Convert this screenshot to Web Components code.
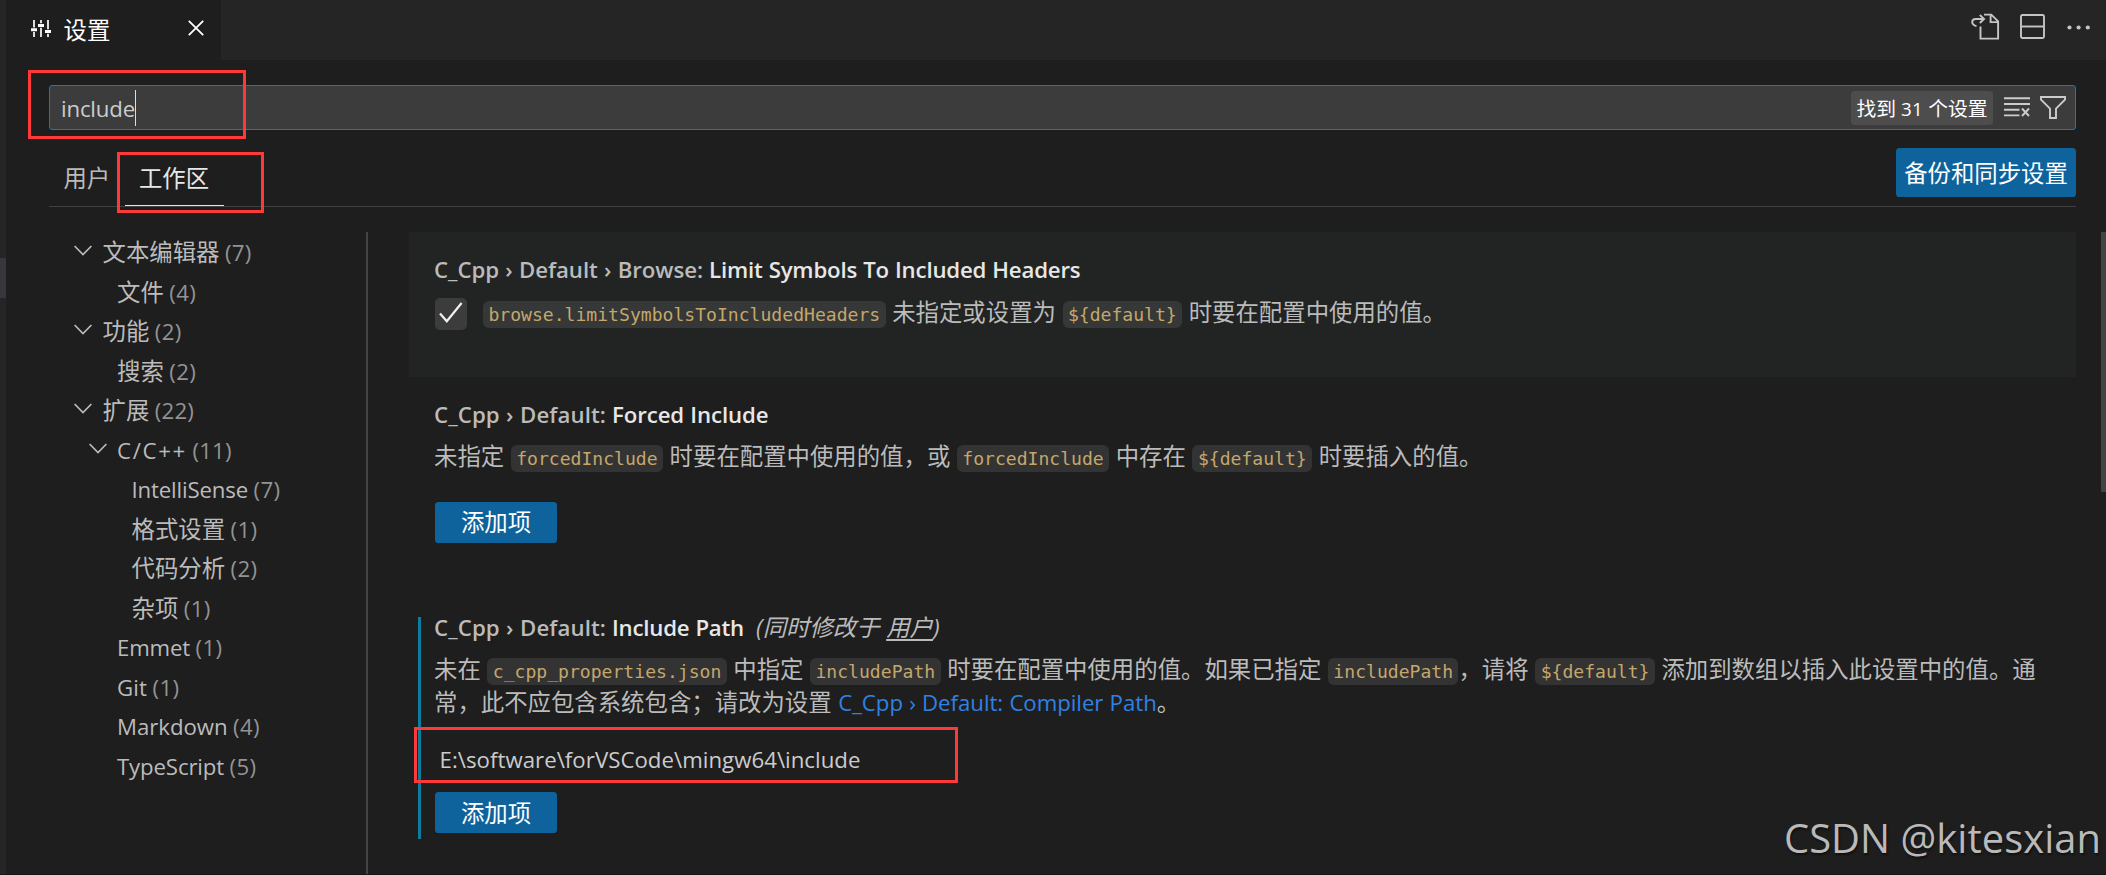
<!DOCTYPE html>
<html lang="zh-CN">
<head>
<meta charset="utf-8">
<title>设置</title>
<style>
  body {
    margin: 0;
    width: 2106px;
    height: 875px;
    overflow: hidden;
    background: #1e1e1e;
    color: #bbbbbb;
    font-family: "Open Sans", "Noto Sans CJK SC", sans-serif;
    font-size: 23.4px;
    line-height: 33px;
  }
</style>
</head>
<body>
<settings-editor></settings-editor>

<script>
// Latin text set to a given advance width
class TextRun extends HTMLElement {
  constructor() {
    super();
    this.attachShadow({mode: 'open'}).innerHTML = `
      <style>
        :host { display: inline-block; white-space: pre; font-size: .95em; }
      </style>
      <span><slot></slot></span>
    `.trim().replace(/\n\s*<span>/, '<span>');
  }

  connectedCallback() {
    const width = Number(this.getAttribute('width'));
    if (!width) return;
    const natural = this.shadowRoot.querySelector('span').getBoundingClientRect().width;
    this.style.letterSpacing = (width - natural) / this.textContent.length + 'px';
    this.style.width = width + 'px';
  }
}

class CodeChip extends HTMLElement {
  constructor() {
    super();
    this.attachShadow({mode: 'open'}).innerHTML = `
      <style>
        :host {
          display: inline;
          padding: 3px 5.4px;
          border-radius: 6px;
          background: rgba(255, 255, 255, .095);
          color: #c5a76b;
          font-family: "DejaVu Sans Mono", monospace;
          font-size: 18.09px;
          word-spacing: 0;
        }
      </style><slot></slot>`;
  }
}

class UiButton extends HTMLElement {
  constructor() {
    super();
    this.attachShadow({mode: 'open'}).innerHTML = `
      <style>
        :host {
          display: flex;
          align-items: center;
          justify-content: center;
          box-sizing: border-box;
          width: 122px;
          height: 41px;
          padding-top: 1px;
          border-radius: 3.6px;
          background: #0e639c;
          color: #fff;
        }
      </style>
      <slot></slot>
    `;
  }
}

const ICONS = {
  sliders: [20, 17, `<path d="M3 0v7.500M3 12v5M10 0v3.300M10 7.800v9.200M17 0v9.300M17 13.700v3.300" stroke-width="1.700"/>
    <path d="M0 9.800h6M7 5.500h6M14 11.500h6" stroke-width="3"/>`],
  close: [16, 16, '<path d="M.8.8l14.4 14.4M15.2.8L.8 15.2" stroke-width="1.8"/>'],
  goto: [30, 28, `<path d="M13 1.600h7.300l6.800 6.800v17.200h-17.600v-12M19.600 1.600v7.500h7.500" stroke-width="1.9"/>
    <path d="M5.500 13.200C-.4 11.500.2 6.200 4.800 6H13M8.800 2l4.300 4-4.300 4" stroke-width="1.900"/>`],
  split: [25, 25, '<rect x="1" y="1" width="23" height="23" rx="1.500" stroke-width="1.900"/><path d="M1 12.500h23" stroke-width="1.900"/>'],
  more: [24, 5, '<g fill="currentColor" stroke="none"><circle cx="2.500" cy="2.500" r="2.100"/><circle cx="11.600" cy="2.500" r="2.100"/><circle cx="20.800" cy="2.500" r="2.100"/></g>'],
  clear: [26, 20, '<path d="M0 1.300h26M0 7h26M0 12.700h15.500M0 18.400h15.500M18 11.500l7 7.500M25 11.500l-7 7.500" stroke-width="1.900"/>'],
  filter: [26, 23, '<path d="M1 1h24v2.600l-9 9V22h-6v-9.400l-9-9z" stroke-width="1.900"/>'],
  chevron: [18, 11, '<path d="M.6 1l8.400 8.600L17.400 1" stroke-width="1.700"/>'],
  check: [24, 21, '<path d="M1 11.500l6.800 7.700L22.600 1" stroke-width="2.200"/>']
};

class UiIcon extends HTMLElement {
  constructor() {
    super();
    this.attachShadow({mode: 'open'});
  }

  connectedCallback() {
    const [w, h, body] = ICONS[this.getAttribute('name')];
    this.shadowRoot.innerHTML = `
      <style>
        :host { display: block; flex: none; width: ${w}px; height: ${h}px; }
        svg { display: block; }
      </style>
      <svg width="${w}" height="${h}" viewBox="0 0 ${w} ${h}" fill="none" stroke="currentColor">${body}</svg>
    `;
  }
}

class EditorTabs extends HTMLElement {
  constructor() {
    super();
    this.attachShadow({mode: 'open'}).innerHTML = `
      <style>
        :host { display: flex; height: 60px; background: #252526; }
        .tab {
          display: flex;
          align-items: flex-start;
          box-sizing: border-box;
          width: 215px;
          padding: 20px 17px 0 25px;
          background: #1e1e1e;
          color: #fff;
        }
        .tab span { margin: -6px auto 0 12.500px; }
        .actions {
          display: flex;
          align-items: center;
          margin-left: auto;
          padding: 0 15px 6px 0;
          color: #c5c5c5;
        }
        ui-icon[name="split"] { margin: 0 22px 1px 19px; }
      </style>
      <div class="tab">
        <ui-icon name="sliders"></ui-icon><span>设置</span><ui-icon name="close"></ui-icon>
      </div>
      <div class="actions">
        <ui-icon name="goto"></ui-icon><ui-icon name="split"></ui-icon><ui-icon name="more"></ui-icon>
      </div>
    `;
  }
}

class SearchBox extends HTMLElement {
  constructor() {
    super();
    this.attachShadow({mode: 'open'}).innerHTML = `
      <style>
        :host {
          display: flex;
          align-items: center;
          box-sizing: border-box;
          height: 45px;
          padding: 0 9px 0 11px;
          border: 1px solid #007fd4;
          border-radius: 3px;
          background: #3c3c3c;
          color: #cccccc;
        }
        .query { padding-top: 2px; }
        .caret { width: 1px; height: 36px; background: #ddd; }
        .count {
          box-sizing: border-box;
          margin-left: auto;
          width: 142px;
          height: 34px;
          line-height: 34px;
          padding-top: 1.500px;
          margin-right: 11px;
          border-radius: 4px;
          background: #4d4d4d;
          color: #fff;
          font-size: 19.8px;
          text-align: center;
        }
        ui-icon { margin-bottom: 1px; }
        ui-icon + ui-icon { margin-left: 10px; }
      </style>
      <text-run class="query" width="74">include</text-run><div class="caret"></div>
      <div class="count">找到 <text-run width="22">31</text-run> 个设置</div>
      <ui-icon name="clear"></ui-icon><ui-icon name="filter"></ui-icon>
    `;
  }
}

class ScopeBar extends HTMLElement {
  constructor() {
    super();
    this.attachShadow({mode: 'open'}).innerHTML = `
      <style>
        :host {
          display: flex;
          align-items: flex-start;
          box-sizing: border-box;
          height: 59px;
          border-bottom: 1px solid #404040;
        }
        .scope {
          box-sizing: border-box;
          height: 58px;
          padding: 14px 14.400px 0;
        }
        .active { color: #e7e7e7; border-bottom: 1px solid #e7e7e7; }
        ui-button { width: 180px; height: 49px; margin-left: auto; }
      </style>
      <div class="scope">用户</div>
      <div class="scope active">工作区</div>
      <ui-button>备份和同步设置</ui-button>
    `;
  }
}

class TocItem extends HTMLElement {
  constructor() {
    super();
    this.attachShadow({mode: 'open'});
  }

  connectedCallback() {
    const level = Number(this.getAttribute('level'));
    const open = this.hasAttribute('open');
    const count = this.getAttribute('count');
    const width = count.length > 1 ? 39.2 : 26.8;
    this.shadowRoot.innerHTML = `
      <style>
        :host {
          display: flex;
          align-items: center;
          box-sizing: border-box;
          height: 39.500px;
          line-height: 37.500px;
          padding: 2px 0 0 ${25 + level * 14.5}px;
        }
        .twistie { width: 28.500px; }
        ui-icon { margin-bottom: 4px; }
        .count { margin-left: 5.500px; color: #939393; }
      </style>
      <div class="twistie">${open ? '<ui-icon name="chevron"></ui-icon>' : ''}</div>
      <slot></slot>
      <div class="count"><text-run width="${width}">(${count})</text-run></div>
    `;
  }
}

class SettingRow extends HTMLElement {
  constructor() {
    super();
    this.attachShadow({mode: 'open'}).innerHTML = `
      <style>
        :host {
          display: flex;
          box-sizing: border-box;
          padding: 20.600px 0 0 9px;
        }
        :host([focused]) { padding-top: 21.400px; background: #212423; }
        .indicator { width: 3px; height: 222px; margin: 6px 13px 0 0; }
        :host([modified]) .indicator { background: #0c7d9d; }
        .body { min-width: 0; word-spacing: .5px; white-space: nowrap; }
        .title { display: flex; height: 33px; margin-bottom: 9.200px; font-weight: 600; }
        .name { color: #e7e7e7; margin-left: 6px; }
        .note { margin-left: 12px; font-weight: 400; font-style: italic; }
      </style>
      <div class="indicator"></div>
      <div class="body">
        <div class="title">
          <slot name="category"></slot>
          <div class="name"><slot name="name"></slot></div>
          <div class="note"><slot name="note"></slot></div>
        </div>
        <slot></slot>
      </div>
    `;
  }
}

class CheckBox extends HTMLElement {
  constructor() {
    super();
    this.attachShadow({mode: 'open'}).innerHTML = `
      <style>
        :host {
          display: flex;
          align-items: center;
          justify-content: center;
          width: 32px;
          height: 32px;
          border-radius: 5px;
          background: #3c3c3c;
          color: #f0f0f0;
        }
        ui-icon { margin-bottom: 3px; }
      </style>
      <ui-icon name="check"></ui-icon>
    `;
  }
}

// red frame drawn over the editor
class MarkFrame extends HTMLElement {
  connectedCallback() {
    const [x, y, w, h] = this.getAttribute('box').split(' ');
    this.attachShadow({mode: 'open'}).innerHTML = `
      <style>
        :host {
          position: absolute;
          left: ${x}px;
          top: ${y}px;
          width: ${w}px;
          height: ${h}px;
          box-sizing: border-box;
          border: 3px solid #ff3838;
        }
      </style>
    `;
  }
}

class SettingsEditor extends HTMLElement {
  constructor() {
    super();
    this.attachShadow({mode: 'open'}).innerHTML = `
      <style>
        :host {
          display: flex;
          position: relative;
          box-sizing: border-box;
          height: 875px;
          border-bottom: 1px solid #1a1518;
          overflow: hidden;
        }
        .side { width: 6px; padding-top: 258px; box-sizing: border-box; background: #252526; }
        .side div { height: 40px; background: #37373d; }
        main { flex: 1; display: flex; flex-direction: column; min-width: 0; }
        .header { padding: 25px 30px 0 43px; }
        scope-bar { margin-top: 18px; }
        .content { flex: 1; display: flex; min-height: 0; padding: 25px 0 0 43px; }
        .toc {
          box-sizing: border-box;
          width: 319px;
          border-right: 2px solid #444444;
        }
        .list { width: 1667px; margin-left: 41px; }
        .scroll { width: 5px; height: 260px; margin-left: auto; background: #434343; }
        .check-line { display: flex; margin-left: 1px; }
        .check-line p { margin-left: 16px; }
        p { height: 33px; margin: 0; }
        ui-button { margin-left: 1px; }
        .path { margin: 24px 0 16px 5.500px; color: #cccccc; }
        a { color: #2f82e4; }
        u { text-underline-offset: 3px; text-decoration-thickness: 1.500px; }
        .watermark {
          position: absolute;
          right: 5px;
          bottom: 9px;
          color: #b9b9b9;
          font-size: 42px;
          line-height: 54px;
          text-shadow: 1px 2px 2px #111;
        }
      </style>
      <div class="side"><div></div></div>
      <main>
        <editor-tabs></editor-tabs>
        <div class="header">
          <search-box></search-box>
          <scope-bar></scope-bar>
        </div>
        <div class="content">
          <div class="toc">
            <toc-item level="0" open count="7">文本编辑器</toc-item>
            <toc-item level="1" count="4">文件</toc-item>
            <toc-item level="0" open count="2">功能</toc-item>
            <toc-item level="1" count="2">搜索</toc-item>
            <toc-item level="0" open count="22">扩展</toc-item>
            <toc-item level="1" open count="11"><text-run width="70">C/C++</text-run></toc-item>
            <toc-item level="2" count="7"><text-run width="116.500">IntelliSense</text-run></toc-item>
            <toc-item level="2" count="1">格式设置</toc-item>
            <toc-item level="2" count="2">代码分析</toc-item>
            <toc-item level="2" count="1">杂项</toc-item>
            <toc-item level="1" count="1"><text-run width="73">Emmet</text-run></toc-item>
            <toc-item level="1" count="1"><text-run width="30">Git</text-run></toc-item>
            <toc-item level="1" count="4"><text-run width="110.500">Markdown</text-run></toc-item>
            <toc-item level="1" count="5"><text-run width="107">TypeScript</text-run></toc-item>
          </div>
          <div class="list">
            <setting-row focused style="height: 145px">
              <text-run slot="category" width="269">C_Cpp › Default › Browse:</text-run>
              <text-run slot="name" width="371.500">Limit Symbols To Included Headers</text-run>
              <div class="check-line">
                <check-box style="margin-top: 2px"></check-box>
                <p><code-chip>browse.limitSymbolsToIncludedHeaders</code-chip> 未指定或设置为 <code-chip>\${default}</code-chip> 时要在配置中使用的值。</p>
              </div>
            </setting-row>
            <setting-row style="height: 213.400px">
              <text-run slot="category" width="172">C_Cpp › Default:</text-run>
              <text-run slot="name" width="156.500">Forced Include</text-run>
              <p>未指定 <code-chip>forcedInclude</code-chip> 时要在配置中使用的值，或 <code-chip>forcedInclude</code-chip> 中存在 <code-chip>\${default}</code-chip> 时要插入的值。</p>
              <ui-button style="margin-top: 29.200px">添加项</ui-button>
            </setting-row>
            <setting-row modified>
              <text-run slot="category" width="172">C_Cpp › Default:</text-run>
              <text-run slot="name" width="132">Include Path</text-run>
              <span slot="note">(同时修改于 <u>用户</u>)</span>
              <p>未在 <code-chip>c_cpp_properties.json</code-chip> 中指定 <code-chip>includePath</code-chip> 时要在配置中使用的值。如果已指定 <code-chip>includePath</code-chip>，请将 <code-chip>\${default}</code-chip> 添加到数组以插入此设置中的值。通</p>
              <p>常，此不应包含系统包含；请改为设置 <a><text-run width="318.500">C_Cpp › Default: Compiler Path</text-run></a>。</p>
              <p class="path"><text-run width="421">E:\\software\\forVSCode\\mingw64\\include</text-run></p>
              <ui-button>添加项</ui-button>
            </setting-row>
          </div>
          <div class="scroll"></div>
        </div>
      </main>
      <mark-frame box="28 70 218 69"></mark-frame>
      <mark-frame box="117 152 147 61"></mark-frame>
      <mark-frame box="414 727 544 56"></mark-frame>
      <div class="watermark"><text-run width="317">CSDN @kitesxian</text-run></div>
    `;
  }
}

customElements.define('text-run', TextRun);
customElements.define('code-chip', CodeChip);
customElements.define('ui-button', UiButton);
customElements.define('ui-icon', UiIcon);
customElements.define('editor-tabs', EditorTabs);
customElements.define('search-box', SearchBox);
customElements.define('scope-bar', ScopeBar);
customElements.define('toc-item', TocItem);
customElements.define('setting-row', SettingRow);
customElements.define('check-box', CheckBox);
customElements.define('mark-frame', MarkFrame);
customElements.define('settings-editor', SettingsEditor);
</script>
</body>
</html>
